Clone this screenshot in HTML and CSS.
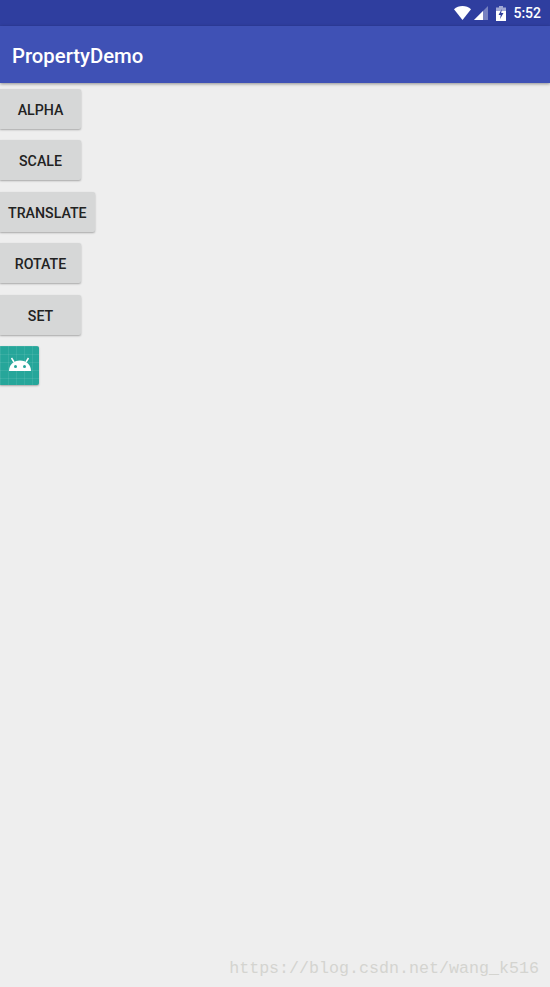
FILE: index.html
```html
<!DOCTYPE html>
<html lang="en">
<head>
  <meta charset="UTF-8">
  <meta name="viewport" content="width=device-width, initial-scale=1.0">
  <title>PropertyDemo</title>
  <link rel="stylesheet" href="styles.css">
</head>
<body>
  <div class="status-bar">
    <svg class="status-wifi" width="17" height="14" viewBox="0 0 18 14" preserveAspectRatio="none">
      <path d="M0 3.200C2.500 1.200 5.600 0 9 0s6.500 1.200 9 3.200L9 14z" fill="#fff"/>
    </svg>
    <svg class="status-signal" width="14" height="14" viewBox="0 0 14 14">
      <path d="M14 0v14H0z" fill="#fff" fill-opacity="0.35"/>
      <path d="M9 5v9H0z" fill="#fff"/>
    </svg>
    <svg class="status-battery" width="10" height="15" viewBox="0 0 10 15">
      <path d="M3 0h4v1.500h3V5H0V1.500h3z" fill="#fff" fill-opacity="0.55"/>
      <path d="M0 5h10v10H0z" fill="#fff"/>
      <path d="M5.800 3L2.500 9h2.200L4 13l3.500-6H5.200z" fill="#2f3e9f"/>
    </svg>
    <span class="status-time">5:52</span>
  </div>
  <header class="app-bar">PropertyDemo</header>
  <main class="content">
    <button class="btn">ALPHA</button>
    <button class="btn">SCALE</button>
    <button class="btn">TRANSLATE</button>
    <button class="btn">ROTATE</button>
    <button class="btn">SET</button>
    <div class="launcher">
      <svg width="22" height="14" viewBox="0 0 22 14">
        <path d="M0 14C0 8 4.500 3.500 11 3.500S22 8 22 14z" fill="#fff"/>
        <path d="M5 5L2.500 1M17 5l2.500-4" stroke="#fff" stroke-width="1.500" fill="none"/>
        <circle cx="6.500" cy="9.500" r="1.500" fill="#26a69a"/>
        <circle cx="15.500" cy="9.500" r="1.500" fill="#26a69a"/>
      </svg>
    </div>
  </main>
  <div class="watermark">https://blog.csdn.net/wang_k516</div>
</body>
</html>
```

FILE: styles.css
```css
html,
body {
  height: 100%;
}

body {
  margin: 0;
  background-color: #eeeeee;
  font-family: Roboto, sans-serif;
  overflow: hidden;
}

.status-bar {
  height: 26px;
  padding-right: 9px;
  background-color: #2f3e9f;
  color: white;
  display: flex;
  align-items: center;
  justify-content: flex-end;
}

.status-wifi {
  margin-right: 3px;
}

.status-signal {
  margin-right: 8px;
}

.status-battery {
  margin-right: 7px;
}

.status-time {
  font-size: 14px;
  font-weight: 500;
}

.app-bar {
  height: 57px;
  padding-left: 12px;
  background-color: #3f51b5;
  color: white;
  font-size: 20.300px;
  font-weight: 500;
  line-height: 60px;
  box-shadow: 0 1px 3px rgba(0, 0, 0, 0.4);
}

.content {
  padding-top: 6px;
  display: flex;
  flex-direction: column;
  align-items: flex-start;
  gap: 11.400px;
}

.btn {
  min-width: 81px;
  height: 40px;
  padding: 2px 8px 0;
  border: none;
  border-radius: 0 2px 2px 0;
  background-color: #d6d7d7;
  color: #222222;
  font-family: Roboto, sans-serif;
  font-size: 14.200px;
  font-weight: 500;
  box-shadow: 0 1px 2px rgba(0, 0, 0, 0.3);
}

.launcher {
  width: 39px;
  height: 39px;
  padding-bottom: 3px;
  box-sizing: border-box;
  border-radius: 0 2px 2px 0;
  background-color: #26a69a;
  background-image:
    linear-gradient(rgba(255, 255, 255, 0.08) 1px, transparent 1px),
    linear-gradient(90deg, rgba(255, 255, 255, 0.08) 1px, transparent 1px);
  background-size: 8px 8px;
  box-shadow: 0 1px 2px rgba(0, 0, 0, 0.3);
  display: flex;
  align-items: center;
  justify-content: center;
}

.watermark {
  position: absolute;
  right: 11px;
  bottom: 9px;
  color: #d4d4d0;
  font-family: "Liberation Mono", monospace;
  font-size: 16.670px;
}
```
